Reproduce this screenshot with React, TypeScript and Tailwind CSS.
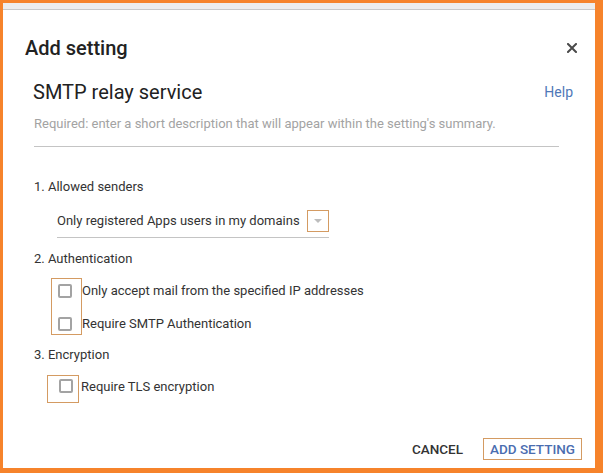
import React from "react";

function Checkbox() {
  return <div className="w-[14px] h-[14px] border-2 border-[#a3a3a3] rounded-[2px] bg-white" />;
}

export default function App() {
  return (
    <div className="w-[603px] h-[473px] bg-[#f6832b] pt-[3px] pl-[3px] pr-[8px] pb-[5px] flex flex-col font-[family-name:Roboto,'Liberation_Sans',sans-serif]">
      <div className="flex-1 bg-white flex flex-col">
        <div className="h-[7px] bg-[#ededed] border-b border-[#c9c9c9]" />

        <div className="mt-[20px] h-[36px] flex items-center justify-between pl-[22px] pr-[17px]">
          <span className="text-[20px] font-medium text-[#222222]">Add setting</span>
          <svg width="10" height="10" viewBox="0 0 10 10" className="mr-[1px]">
            <path d="M1 1L9 9M9 1L1 9" stroke="#4a4a4a" strokeWidth="2" strokeLinecap="square" />
          </svg>
        </div>

        <div className="mt-[14px] h-[24px] flex items-center justify-between pl-[30px] pr-[22px]">
          <span className="text-[20px] text-[#212121]">SMTP relay service</span>
          <span className="text-[14px] text-[#4f78b8]">Help</span>
        </div>

        <div className="mt-[12px] h-[16px] flex items-center pl-[31px] text-[13px] text-[#a3a3a3]">
          Required: enter a short description that will appear within the setting's summary.
        </div>

        <div className="mt-[14px] h-px bg-[#c4c4c4] ml-[31px] mr-[36px]" />

        <div className="mt-[30px] h-[20px] flex items-center pl-[31px] text-[13px] text-[#333333]">
          1. Allowed senders
        </div>

        <div className="mt-[13px] ml-[54px] w-[272px] h-[22px] flex items-center text-[13px] text-[#333333]">
          <span>Only registered Apps users in my domains</span>
          <div className="ml-auto w-[22px] h-[22px] border border-[#d49b62] flex items-center justify-center">
            <svg width="8" height="5" viewBox="0 0 8 5">
              <path d="M0 0H8L4 4Z" fill="#bdbdbd" />
            </svg>
          </div>
        </div>
        <div className="mt-[5px] h-px bg-[#c4c4c4] ml-[54px] w-[272px]" />

        <div className="mt-[11px] h-[20px] flex items-center pl-[31px] text-[13px] text-[#333333]">
          2. Authentication
        </div>

        <div className="mt-[9px] ml-[48px] flex">
          <div className="w-[31px] border border-[#d49b62] pt-[2px] flex flex-col gap-[13px]">
            <div className="h-[20px] flex items-center pl-[6px]"><Checkbox /></div>
            <div className="h-[20px] flex items-center pl-[6px]"><Checkbox /></div>
          </div>
          <div className="pt-[3px] flex flex-col gap-[13px] text-[13px] text-[#333333]">
            <div className="h-[20px] flex items-center">Only accept mail from the specified IP addresses</div>
            <div className="h-[20px] flex items-center">Require SMTP Authentication</div>
          </div>
        </div>

        <div className="mt-[10px] h-[20px] flex items-center pl-[31px] text-[13px] text-[#333333]">
          3. Encryption
        </div>

        <div className="mt-[10px] ml-[44px] flex">
          <div className="w-[32px] h-[28px] border border-[#d49b62] pt-[3px] pl-[11px]">
            <Checkbox />
          </div>
          <div className="pt-[2px] pl-[2px]">
            <div className="h-[20px] flex items-center text-[13px] text-[#333333]">Require TLS encryption</div>
          </div>
        </div>

        <div className="flex-1" />

        <div className="mb-[8px] mr-[13px] h-[22px] flex items-center justify-end">
          <span className="text-[13.5px] font-medium text-[#333333] mr-[20px]">CANCEL</span>
          <div className="h-[22px] w-[99px] border border-[#d49b62] flex items-center pl-[6px] text-[13.5px] font-medium text-[#4a6db0]">
            ADD SETTING
          </div>
        </div>
      </div>
    </div>
  );
}
